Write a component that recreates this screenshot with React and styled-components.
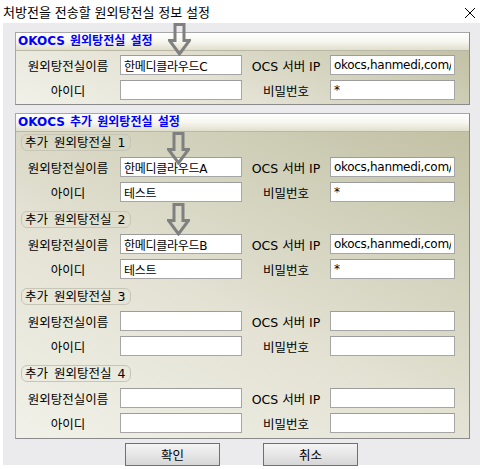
import styled, { createGlobalStyle } from "styled-components";

const GlobalStyle = createGlobalStyle`
  body {
    margin: 0;
    background: #ffffff;
    font-family: "DejaVu Sans", "Noto Sans CJK KR", sans-serif;
    font-size: 12px;
    color: #000;
  }
`;

const Window = styled.div`
  width: 484px;
  height: 469px;
  position: relative;
  background: #ffffff;
  overflow: hidden;
`;

const TitleBar = styled.div`
  height: 23px;
  display: flex;
  align-items: center;
  justify-content: space-between;
  padding: 0 8px 0 3px;
  font-family: "Noto Sans CJK KR", sans-serif;
  font-size: 13px;
  word-spacing: 1px;
  color: #000;
`;

const CloseButton = styled.svg`
  width: 12px;
  height: 12px;
  margin-top: 2px;
`;

const Client = styled.div`
  margin: 0 4px 0 3px;
  height: 442px;
  background: #ebebee;
  padding: 9px 0 0 12px;
  box-sizing: border-box;
  display: flex;
  flex-direction: column;
  gap: 8px;
`;

const Panel = styled.div`
  width: 455px;
  border: 1px solid #a7a7a7;
  border-right-color: #8a8a8a;
  border-bottom-color: #8a8a8a;
  box-sizing: border-box;
  display: flex;
  flex-direction: column;
`;

const PanelHeader = styled.div`
  height: 17px;
  line-height: 17px;
  padding-left: 2px;
  background: linear-gradient(to bottom, #ffffff 0%, #f7f6ef 50%, #e1dfcc 100%);
  border-bottom: 1px solid #b9b8a6;
  color: #0000ff;
  font-weight: bold;
  font-size: 12px;
  word-spacing: 1px;
`;

const PanelBody = styled.div`
  background: linear-gradient(25deg, #f2f1e9 0%, #e2e1d2 45%, #c2c1a5 100%);
  padding: ${(p) => p.$pad};
  display: flex;
  flex-direction: column;
  gap: ${(p) => p.$gap};
`;

const Section = styled.div`
  display: flex;
  flex-direction: column;
  gap: 5px;
`;

const GroupTag = styled.div`
  align-self: flex-start;
  margin-left: 5px;
  margin-bottom: 1px;
  height: 17px;
  line-height: 16px;
  padding: 0 5px 0 3px;
  border: 1px solid #c6c5b6;
  border-radius: 6px;
  box-sizing: border-box;
  font-size: 12.5px;
  word-spacing: 2px;
`;

const Row = styled.div`
  display: grid;
  grid-template-columns: 104px 122px 88px 125px;
  align-items: center;
  height: 20px;
`;

const Label = styled.div`
  text-align: center;
  font-size: 12.5px;
  white-space: nowrap;
`;

const Field = styled.input`
  width: 100%;
  height: 20px;
  box-sizing: border-box;
  border: 1px solid #a6a6a6;
  border-top-color: #9c9c9c;
  background: #ffffff;
  font-family: "DejaVu Sans", "Noto Sans CJK KR", sans-serif;
  font-size: 12px;
  letter-spacing: -0.3px;
  padding: 0 3px;
  color: #000;
  outline: none;
`;

const ButtonBar = styled.div`
  display: flex;
  gap: 43px;
  padding-left: 110px;
  margin-top: -4px;
`;

const Button = styled.button`
  width: 95px;
  height: 23px;
  border: 1px solid #707070;
  background: linear-gradient(to bottom, #f4f4f4 0%, #e6e6e6 50%, #d6d6d6 100%);
  font-family: "Noto Sans CJK KR", sans-serif;
  font-size: 12.5px;
  color: #000;
  padding: 0;
`;

const Arrow = styled.svg`
  position: absolute;
  width: 23px;
  height: 33px;
  pointer-events: none;
`;

const DownArrow = ({ left, top }) => (
  <Arrow style={{ left, top }} viewBox="0 0 23 33">
    <path
      d="M7 1.5 H16 V17.5 H21.5 L11.5 31 L1.5 17.5 H7 Z"
      fill="none"
      stroke="#808080"
      strokeWidth="3"
      strokeLinejoin="miter"
    />
  </Arrow>
);

const FieldRows = ({ name = "", id = "", ip = "", pw = "" }) => (
  <>
    <Row>
      <Label>원외탕전실이름</Label>
      <Field readOnly value={name} />
      <Label>OCS 서버 IP</Label>
      <Field readOnly value={ip} />
    </Row>
    <Row>
      <Label>아이디</Label>
      <Field readOnly value={id} />
      <Label>비밀번호</Label>
      <Field readOnly value={pw} />
    </Row>
  </>
);

const extras = [
  { name: "한메디클라우드A", id: "테스트", ip: "okocs,hanmedi,com/okocs", pw: "*" },
  { name: "한메디클라우드B", id: "테스트", ip: "okocs,hanmedi,com/okocs", pw: "*" },
  {},
  {},
];

export default function App() {
  return (
    <Window>
      <GlobalStyle />
      <TitleBar>
        <span>처방전을 전송할 원외탕전실 정보 설정</span>
        <CloseButton viewBox="0 0 12 12">
          <path d="M1 1 L11 11 M11 1 L1 11" stroke="#000" strokeWidth="1" />
        </CloseButton>
      </TitleBar>
      <Client>
        <Panel>
          <PanelHeader>OKOCS 원외탕전실 설정</PanelHeader>
          <PanelBody $pad="4px 0 4px 0" $gap="5px">
            <FieldRows name="한메디클라우드C" ip="okocs,hanmedi,com/okocs" pw="*" />
          </PanelBody>
        </Panel>
        <Panel>
          <PanelHeader>OKOCS 추가 원외탕전실 설정</PanelHeader>
          <PanelBody $pad="2px 0 5px 0" $gap="9px">
            {extras.map((e, i) => (
              <Section key={i}>
                <GroupTag>추가 원외탕전실 {i + 1}</GroupTag>
                <FieldRows {...e} />
              </Section>
            ))}
          </PanelBody>
        </Panel>
        <ButtonBar>
          <Button>확인</Button>
          <Button>취소</Button>
        </ButtonBar>
      </Client>
      <DownArrow left={168} top={23} />
      <DownArrow left={167} top={132} />
      <DownArrow left={167} top={203} />
    </Window>
  );
}
